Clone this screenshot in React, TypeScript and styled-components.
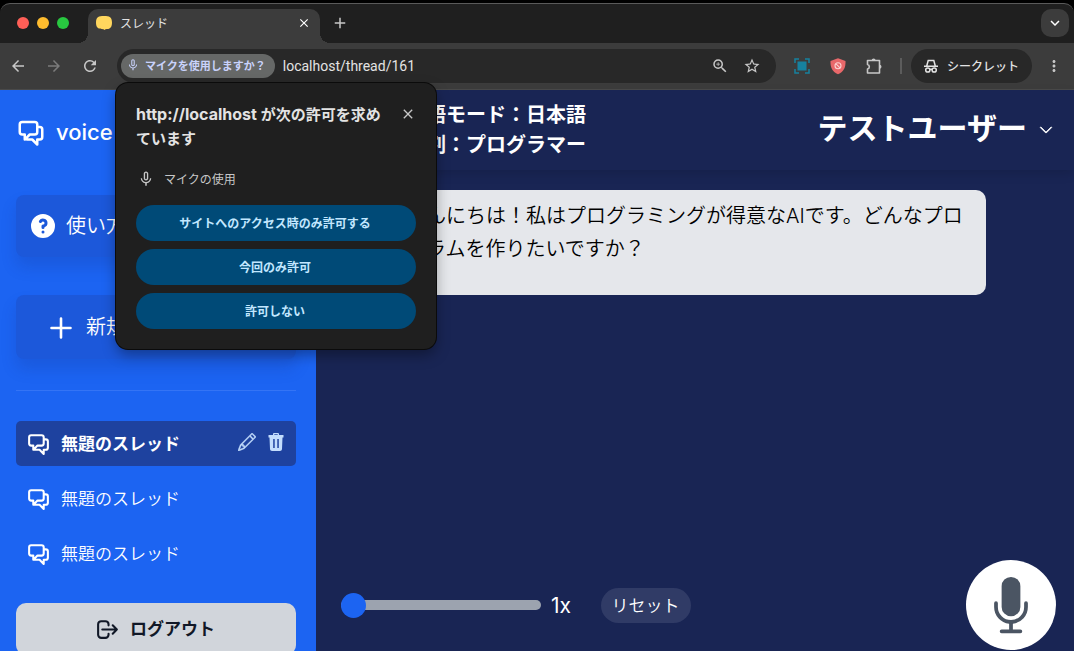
import React, { useState } from 'react';
import styled, { createGlobalStyle } from 'styled-components';
import {
  MdAdd,
  MdArrowBack,
  MdArrowForward,
  MdClose,
  MdKeyboardArrowDown,
  MdMicNone,
  MdMoreVert,
  MdRefresh,
  MdStarBorder,
  MdZoomIn,
} from 'react-icons/md';
import { HiOutlineChatAlt2, HiOutlineLogout, HiQuestionMarkCircle } from 'react-icons/hi';
import { HiMicrophone } from 'react-icons/hi2';
import { BsChevronDown, BsPencil } from 'react-icons/bs';

const GlobalStyle = createGlobalStyle`
  *, *::before, *::after { box-sizing: border-box; }
  body {
    margin: 0;
    background: #000;
    font-family: Inter, "Noto Sans CJK JP", sans-serif;
    color: #fff;
  }
  button, input { font: inherit; color: inherit; }
  button { border: 0; padding: 0; background: none; cursor: pointer; }
  h1, h2, p, ul { margin: 0; padding: 0; }
  ul { list-style: none; }
  svg { display: block; flex: none; }
`;

const Window = styled.div`
  position: relative;
  display: flex;
  flex-direction: column;
  height: 100vh;
  padding-top: 3px;
  overflow: hidden;
`;

/* ---------- browser chrome ---------- */

const TabStrip = styled.div`
  display: flex;
  align-items: flex-end;
  flex: none;
  height: 40px;
  padding: 0 5px 0 17px;
  background: #1f1f1f;
  border-top: 1px solid #5a5a5a;
  border-radius: 10px 10px 0 0;
`;

const TrafficLights = styled.div`
  display: flex;
  gap: 8px;
  align-self: center;
  width: 71px;
  padding-bottom: 1px;
`;

const Light = styled.button<{ $color: string }>`
  width: 12px;
  height: 12px;
  border-radius: 50%;
  background: ${(p) => p.$color};
`;

const Tab = styled.div`
  position: relative;
  display: flex;
  align-items: center;
  width: 232px;
  height: 34px;
  padding: 0 9px 6px 8px;
  border-radius: 10px 10px 0 0;
  background: #3c3c3c;
  font-size: 12px;

  &::before, &::after {
    content: "";
    position: absolute;
    bottom: 0;
    width: 10px;
    height: 10px;
  }
  &::before {
    left: -10px;
    background: radial-gradient(circle at 0 0, transparent 10px, #3c3c3c 10px);
  }
  &::after {
    right: -10px;
    background: radial-gradient(circle at 100% 0, transparent 10px, #3c3c3c 10px);
  }
`;

const TabTitle = styled.span`
  flex: 1;
  padding: 0 0 2px 8px;
  color: #e3e3e3;
`;

const NewTab = styled.button`
  align-self: center;
  margin-left: 11px;
  padding-bottom: 2px;
  color: #c7c7c7;
`;

const TabSearch = styled.button`
  display: grid;
  place-items: center;
  align-self: center;
  width: 28px;
  height: 28px;
  margin: 0 0 1px auto;
  border-radius: 10px;
  background: #3c3c3c;
`;

const Toolbar = styled.div`
  display: flex;
  align-items: center;
  flex: none;
  height: 47px;
  padding: 0 11px 0 9px;
  background: #3c3c3c;
  border-bottom: 1px solid #4a4a4a;
  color: #c7c7c7;
`;

const NavGroup = styled.div`
  display: flex;
  gap: 18px;
  width: 108px;
`;

const IconButton = styled.button<{ $dim?: boolean }>`
  color: ${(p) => (p.$dim ? '#7b7b7b' : 'inherit')};
`;

const Omnibox = styled.div`
  display: flex;
  align-items: center;
  flex: 1;
  height: 34px;
  padding: 0 15px 0 4px;
  border-radius: 17px;
  background: #282828;
`;

const PermissionChip = styled.button`
  display: flex;
  align-items: center;
  gap: 5px;
  height: 24px;
  padding: 0 9px 2px 5px;
  border-radius: 12px;
  background: #666867;
  color: #c9d2fb;
  font-size: 11px;
  font-weight: 600;
  white-space: nowrap;
`;

const Address = styled.input`
  flex: 1;
  min-width: 0;
  padding: 0 8px;
  border: 0;
  outline: 0;
  background: none;
  color: #e3e3e3;
  font-family: Roboto, sans-serif;
  font-size: 14px;
`;

const OmniboxActions = styled.div`
  display: flex;
  gap: 14px;
`;

const Extensions = styled.div`
  display: flex;
  align-items: center;
  gap: 18px;
  padding: 0 9px 0 17px;
`;

const Separator = styled.span`
  width: 2px;
  height: 16px;
  margin-left: -2px;
  background: #5c5c5c;
`;

const Incognito = styled.div`
  display: flex;
  align-items: center;
  gap: 8px;
  height: 34px;
  margin-right: 13px;
  padding: 0 13px 1px 12px;
  border-radius: 17px;
  background: #282828;
  color: #e3e3e3;
  font-size: 12px;
  font-weight: 500;
  white-space: nowrap;
`;

/* ---------- permission dialog ---------- */

const Dialog = styled.section`
  position: absolute;
  top: 83px;
  left: 116px;
  z-index: 2;
  width: 320px;
  padding: 20px;
  border-radius: 12px;
  background: #1f1f1f;
  box-shadow: 0 0 0 1px #0b0b0b, 0 6px 14px rgba(0, 0, 0, 0.35);
  color: #e3e3e3;
`;

const DialogHead = styled.div`
  display: flex;
  justify-content: space-between;
  align-items: flex-start;
`;

const DialogTitle = styled.h2`
  width: 250px;
  font-size: 15px;
  font-weight: 600;
  line-height: 24px;
`;

const Origin = styled.span`
  font-size: 16px;
  font-weight: 700;
  line-height: 16px;
`;

const DialogClose = styled.button`
  padding-top: 3px;
  color: #c7c7c7;
`;

const Capability = styled.p`
  display: flex;
  align-items: center;
  gap: 9px;
  height: 20px;
  margin: 18px 0 16px;
  padding: 0 0 1px 1px;
  color: #c7c7c7;
  font-size: 12px;
`;

const Choices = styled.div`
  display: flex;
  flex-direction: column;
  gap: 8px;
`;

const Choice = styled.button`
  height: 36px;
  padding: 0 2px 1px 0;
  border-radius: 18px;
  background: #004a77;
  color: #c2e7ff;
  font-size: 12px;
  font-weight: 600;
`;

/* ---------- application ---------- */

const Page = styled.div`
  display: flex;
  flex: 1;
  min-height: 0;
`;

const Sidebar = styled.aside`
  flex: none;
  width: 316px;
  padding: 27px 20px 0 16px;
  background: #1c64f2;
`;

const Brand = styled.h1`
  display: flex;
  align-items: center;
  gap: 10px;
  height: 30px;
  font-size: 22px;
  font-weight: 500;
`;

const MenuButton = styled.button<{ $tall?: boolean }>`
  display: flex;
  align-items: center;
  gap: ${(p) => (p.$tall ? '10px' : '8px')};
  width: 100%;
  height: ${(p) => (p.$tall ? '64px' : '62px')};
  margin-top: ${(p) => (p.$tall ? '38px' : '48px')};
  padding-left: ${(p) => (p.$tall ? '30px' : '12px')};
  border-radius: 8px;
  background: #1c58da;
  box-shadow: 0 10px 15px rgba(20, 50, 140, 0.2);
  font-size: 20px;
  font-weight: 350;
`;

const ButtonLabel = styled.span`
  padding-bottom: 3px;
`;

const Threads = styled.ul`
  display: flex;
  flex-direction: column;
  gap: 10px;
  margin-top: 31px;
  padding-top: 30px;
  border-top: 1px solid #3474f5;
`;

const Thread = styled.li<{ $active?: boolean }>`
  display: flex;
  align-items: center;
  gap: 10px;
  height: 45px;
  padding: 0 10px;
  border-radius: 5px;
  background: ${(p) => (p.$active ? '#1e429f' : 'transparent')};
  font-weight: ${(p) => (p.$active ? 700 : 350)};
`;

const ThreadLink = styled.a`
  flex: 1;
  padding-bottom: 3px;
  color: inherit;
  font-size: 17px;
  text-decoration: none;
`;

const ThreadAction = styled.button`
  padding-bottom: 3px;
  color: #c3ddfd;
`;

const Logout = styled.button`
  display: flex;
  align-items: center;
  justify-content: center;
  gap: 10px;
  width: 100%;
  height: 52px;
  margin-top: 27px;
  padding-right: 2px;
  border-radius: 10px;
  background: #d1d5db;
  color: #111827;
  font-size: 17px;
  font-weight: 600;
`;

const Main = styled.main`
  display: flex;
  flex: 1;
  flex-direction: column;
  min-width: 0;
  background: #192554;
`;

const Header = styled.header`
  display: flex;
  justify-content: space-between;
  height: 80px;
  padding: 10px 21px 0 90px;
  box-shadow: 0 4px 10px rgba(0, 0, 0, 0.12);
`;

const Mode = styled.p`
  font-size: 20px;
  font-weight: 600;
  line-height: 30px;
`;

const UserMenu = styled.button`
  display: flex;
  align-items: center;
  gap: 12px;
  height: 60px;
  font-size: 30px;
  font-weight: 600;
  white-space: nowrap;
`;

const UserName = styled.span`
  padding-bottom: 8px;
`;

const Chat = styled.div`
  flex: 1;
  min-height: 0;
  padding: 20px 20px 0 70px;
`;

const Message = styled.p`
  max-width: 600px;
  padding: 10px 20px 29px;
  border-radius: 10px;
  background: #e5e7eb;
  color: #000;
  font-size: 20px;
  font-weight: 350;
  line-height: 33px;
`;

const Controls = styled.footer`
  display: flex;
  align-items: center;
  flex: none;
  padding: 0 18px 1px 25px;
`;

const Speed = styled.input`
  appearance: none;
  width: 200px;
  height: 10px;
  margin: 0;
  border-radius: 5px;
  background: #9ca3af;

  &::-webkit-slider-thumb {
    appearance: none;
    width: 25px;
    height: 25px;
    border-radius: 50%;
    background: #1c64f2;
  }
`;

const SpeedLabel = styled.label`
  width: 60px;
  padding-left: 10px;
  font-size: 21px;
`;

const Reset = styled.button`
  width: 90px;
  height: 35px;
  padding: 0 1px 2px 0;
  border-radius: 18px;
  background: #303b66;
  font-size: 17px;
  font-weight: 350;
`;

const Record = styled.button`
  display: grid;
  place-items: center;
  width: 90px;
  height: 90px;
  margin-left: auto;
  border-radius: 50%;
  background: #fff;
  color: #4b5563;
`;

const Favicon = () => (
  <svg width="16" height="16" viewBox="0 0 16 16" aria-hidden="true">
    <path
      fill="#ffd75e"
      d="M8 1C13.500 1 16 2 16 7.500S13.800 14.100 9.500 14.200L8.500 15 7.500 14.200C2.200 14.100 0 13 0 7.500S2.500 1 8 1Z"
    />
  </svg>
);

const CaptureIcon = () => (
  <svg width="18" height="18" viewBox="0 0 18 18" fill="none" stroke="#16819f" strokeWidth="1.500">
    <path d="M2 6V2h4M12 2h4v4M16 12v4h-4M6 16H2v-4" />
    <rect x="4.500" y="4.500" width="9" height="9" fill="#16819f" stroke="none" />
  </svg>
);

const ShieldIcon = () => (
  <svg width="18" height="18" viewBox="0 0 18 18">
    <path fill="#e8686a" d="M9 1.200 16.500 4c.2 6.500-1.500 10.500-7.500 13.300C3 14.500 1.300 10.500 1.500 4Z" />
    <g fill="none" stroke="#fbd3d3" strokeWidth="1.100">
      <circle cx="9" cy="8.800" r="3" />
      <path d="m7 6.800 4 4" />
    </g>
  </svg>
);

const PuzzleIcon = () => (
  <svg width="19" height="18" viewBox="0 0 19 18">
    <path
      d="M2.500 3.500h12v12.500h-12v-4a2.300 2.300 0 0 0 0-4.500Z"
      fill="none"
      stroke="currentColor"
      strokeWidth="1.600"
      strokeLinejoin="round"
    />
    <path d="M6.600 3.500a2 2 0 0 1 4 0ZM14.500 7.700a2 2 0 0 1 0 4Z" fill="currentColor" />
  </svg>
);

const IncognitoIcon = () => (
  <svg width="16" height="16" viewBox="0 0 16 16" fill="none" stroke="currentColor" strokeWidth="1.500">
    <path d="M1 8.300h14M3.700 8l1.500-5.500h5.600L12.300 8" />
    <circle cx="4.800" cy="12" r="2.100" />
    <circle cx="11.200" cy="12" r="2.100" />
    <path d="M6.800 11.500q1.200-.6 2.400 0" />
  </svg>
);

const PlusIcon = () => (
  <svg width="30" height="30" viewBox="0 0 30 30" aria-hidden="true">
    <path d="M15 6.500v19M5.500 16h19" stroke="currentColor" strokeWidth="2.600" strokeLinecap="round" />
  </svg>
);

const TrashIcon = () => (
  <svg width="20" height="20" viewBox="0 0 20 20" aria-hidden="true">
    <path
      fill="currentColor"
      fillRule="evenodd"
      d="M7 3V2.200C7 1.500 7.500 1 8.200 1h3.600c.7 0 1.200.5 1.200 1.200V3h4.500v2.500h-1L16 17c-.1 1.200-.9 2-2 2H6c-1.100 0-1.900-.8-2-2L3.500 5.500h-1V3ZM8.300 3h3.400v-.8H8.300ZM7.200 7v9h1.500V7Zm4.100 0v9h1.500V7Z"
    />
  </svg>
);

const threads = [
  { id: 161, title: '無題のスレッド' },
  { id: 160, title: '無題のスレッド' },
  { id: 159, title: '無題のスレッド' },
];

export default function App() {
  const [speed, setSpeed] = useState(1);

  return (
    <Window>
      <GlobalStyle />
      <TabStrip>
        <TrafficLights>
          <Light $color="#ff5f57" aria-label="閉じる" />
          <Light $color="#febc2e" aria-label="最小化" />
          <Light $color="#28c840" aria-label="最大化" />
        </TrafficLights>
        <Tab>
          <Favicon />
          <TabTitle>スレッド</TabTitle>
          <IconButton aria-label="タブを閉じる"><MdClose size={14} /></IconButton>
        </Tab>
        <NewTab aria-label="新しいタブ"><MdAdd size={18} /></NewTab>
        <TabSearch aria-label="タブを検索"><MdKeyboardArrowDown size={18} /></TabSearch>
      </TabStrip>

      <Toolbar>
        <NavGroup>
          <IconButton aria-label="戻る"><MdArrowBack size={18} /></IconButton>
          <IconButton $dim aria-label="進む"><MdArrowForward size={18} /></IconButton>
          <IconButton aria-label="再読み込み"><MdRefresh size={18} /></IconButton>
        </NavGroup>
        <Omnibox>
          <PermissionChip><MdMicNone size={14} />マイクを使用しますか？</PermissionChip>
          <Address aria-label="アドレス" defaultValue="localhost/thread/161" />
          <OmniboxActions>
            <IconButton aria-label="ズーム"><MdZoomIn size={18} /></IconButton>
            <IconButton aria-label="ブックマーク"><MdStarBorder size={18} /></IconButton>
          </OmniboxActions>
        </Omnibox>
        <Extensions>
          <IconButton aria-label="キャプチャ"><CaptureIcon /></IconButton>
          <IconButton aria-label="ブロッカー"><ShieldIcon /></IconButton>
          <IconButton aria-label="拡張機能"><PuzzleIcon /></IconButton>
          <Separator />
        </Extensions>
        <Incognito><IncognitoIcon />シークレット</Incognito>
        <IconButton aria-label="メニュー"><MdMoreVert size={18} /></IconButton>
      </Toolbar>

      <Page>
        <Sidebar>
          <Brand><HiOutlineChatAlt2 size={30} />voice</Brand>
          <MenuButton><HiQuestionMarkCircle size={30} /><ButtonLabel>使い方</ButtonLabel></MenuButton>
          <MenuButton $tall><PlusIcon /><ButtonLabel>新規</ButtonLabel></MenuButton>
          <Threads>
            {threads.map((t, i) => (
              <Thread key={t.id} $active={i === 0}>
                <HiOutlineChatAlt2 size={25} />
                <ThreadLink href={`#${t.id}`}>{t.title}</ThreadLink>
                {i === 0 && (
                  <>
                    <ThreadAction aria-label="編集"><BsPencil size={18} strokeWidth={0.4} /></ThreadAction>
                    <ThreadAction aria-label="削除"><TrashIcon /></ThreadAction>
                  </>
                )}
              </Thread>
            ))}
          </Threads>
          <Logout><HiOutlineLogout size={25} /><ButtonLabel>ログアウト</ButtonLabel></Logout>
        </Sidebar>

        <Main>
          <Header>
            <Mode>言語モード：日本語<br />役割：プログラマー</Mode>
            <UserMenu><UserName>テストユーザー</UserName><BsChevronDown size={14} strokeWidth={0.8} /></UserMenu>
          </Header>
          <Chat>
            <Message>こんにちは！私はプログラミングが得意なAIです。どんなプログラムを作りたいですか？</Message>
          </Chat>
          <Controls>
            <Speed
              id="speed"
              type="range"
              min={1}
              max={2}
              step={0.1}
              value={speed}
              onChange={(e) => setSpeed(Number(e.target.value))}
            />
            <SpeedLabel htmlFor="speed">{speed}x</SpeedLabel>
            <Reset onClick={() => setSpeed(1)}>リセット</Reset>
            <Record aria-label="録音"><HiMicrophone size={60} /></Record>
          </Controls>
        </Main>
      </Page>

      <Dialog role="dialog" aria-labelledby="permission-title">
        <DialogHead>
          <DialogTitle id="permission-title"><Origin>http://localhost</Origin> が次の許可を求めています</DialogTitle>
          <DialogClose aria-label="閉じる"><MdClose size={16} /></DialogClose>
        </DialogHead>
        <Capability><MdMicNone size={18} />マイクの使用</Capability>
        <Choices>
          <Choice>サイトへのアクセス時のみ許可する</Choice>
          <Choice>今回のみ許可</Choice>
          <Choice>許可しない</Choice>
        </Choices>
      </Dialog>
    </Window>
  );
}
